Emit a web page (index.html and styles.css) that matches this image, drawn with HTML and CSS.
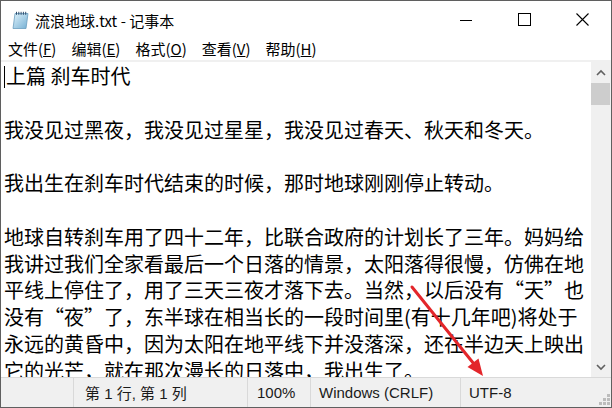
FILE: index.html
```html
<!DOCTYPE html>
<html lang="zh-CN">
<head>
  <meta charset="UTF-8" />
  <title>流浪地球.txt - 记事本</title>
  <link rel="stylesheet" href="styles.css">
</head>
<body>
  <div class="window">
    <header class="titlebar">
      <svg class="app-icon" width="17" height="18" viewBox="0 0 17 18">
        <defs>
          <linearGradient id="pad" x1="0" y1="0" x2="1" y2="1">
            <stop offset="0" stop-color="#dff2fb" />
            <stop offset="1" stop-color="#74afd3" />
          </linearGradient>
        </defs>
        <path d="M3 2.5h13l-2 15H1z" fill="url(#pad)" stroke="#6a9dbf" stroke-width="0.8" />
        <path d="M4.5 0.8v3M6.8 0.8v3M9.1 0.8v3M11.4 0.8v3M13.7 0.8v3" stroke="#2f4d6d" stroke-width="1" />
      </svg>
      <span class="title">流浪地球.txt - 记事本</span>
      <div class="controls">
        <div class="ctl">
          <svg width="12" height="12" viewBox="0 0 12 12"><path d="M0 6.5h12" stroke="#000" stroke-width="1" /></svg>
        </div>
        <div class="ctl">
          <svg width="13" height="13" viewBox="0 0 13 13"><rect x="0.5" y="0.5" width="12" height="12" fill="none" stroke="#000" stroke-width="1" /></svg>
        </div>
        <div class="ctl">
          <svg width="13" height="13" viewBox="0 0 13 13"><path d="M0.5 0.5l12 12M12.5 0.5l-12 12" stroke="#000" stroke-width="1.1" /></svg>
        </div>
      </div>
    </header>

    <nav class="menubar">
      <span>文件(<u>F</u>)</span>
      <span>编辑(<u>E</u>)</span>
      <span>格式(<u>O</u>)</span>
      <span>查看(<u>V</u>)</span>
      <span>帮助(<u>H</u>)</span>
    </nav>

    <section class="editor">
      <div class="text"><span class="caret"></span>上篇 刹车时代

我没见过黑夜，我没见过星星，我没见过春天、秋天和冬天。

我出生在刹车时代结束的时候，那时地球刚刚停止转动。

地球自转刹车用了四十二年，比联合政府的计划长了三年。妈妈给
我讲过我们全家看最后一个日落的情景，太阳落得很慢，仿佛在地
平线上停住了，用了三天三夜才落下去。当然，以后没有“天”也
没有“夜”了，东半球在相当长的一段时间里(有十几年吧)将处于
永远的黄昏中，因为太阳在地平线下并没落深，还在半边天上映出
它的光芒，就在那次漫长的日落中，我出生了。</div>
      <div class="vscroll">
        <div class="arrow">
          <svg width="10" height="7" viewBox="0 0 10 7"><path d="M1 6l4-4 4 4" fill="none" stroke="#606060" stroke-width="1.6" /></svg>
        </div>
        <div class="thumb"></div>
        <div class="track"></div>
        <div class="arrow">
          <svg width="10" height="7" viewBox="0 0 10 7"><path d="M1 1l4 4 4-4" fill="none" stroke="#606060" stroke-width="1.6" /></svg>
        </div>
      </div>
    </section>

    <footer class="statusbar">
      <div class="cell blank"></div>
      <div class="cell pos">第 1 行, 第 1 列</div>
      <div class="cell zoom">100%</div>
      <div class="cell eol">Windows (CRLF)</div>
      <div class="cell enc">UTF-8</div>
      <svg class="grip" width="11" height="11" viewBox="0 0 11 11">
        <rect x="8" y="0" width="3" height="3" />
        <rect x="4" y="4" width="3" height="3" />
        <rect x="8" y="4" width="3" height="3" />
        <rect x="0" y="8" width="3" height="3" />
        <rect x="4" y="8" width="3" height="3" />
        <rect x="8" y="8" width="3" height="3" />
      </svg>
    </footer>

    <!-- красная стрелка-пометка поверх окна -->
    <svg class="annotation" width="612" height="408" viewBox="0 0 612 408">
      <path d="M412 287L474 364" stroke="#e3262b" stroke-width="3" stroke-linecap="round" />
      <path d="M483 376L467.5 367L478.5 358.5z" fill="#e3262b" />
    </svg>
  </div>
</body>
</html>
```

FILE: styles.css
```css
:root {
  --border: #5f5f5f;
  --panel: #f0f0f0;
  --line: #d9d9d9;
  --ui-font: "Noto Sans CJK SC", "Noto Sans", sans-serif;
}

* {
  box-sizing: border-box;
}

body {
  margin: 0;
  background: #2b2b2b;
}

.window {
  position: relative;
  width: 612px;
  height: 408px;
  display: flex;
  flex-direction: column;
  background: #fff;
  border: 1px solid var(--border);
  overflow: hidden;
}

.titlebar {
  height: 37px;
  display: flex;
  align-items: center;
  font-family: var(--ui-font);
  font-size: 15px;
  color: #000;
}

.app-icon {
  margin-left: 11px;
  margin-top: 1px;
}

.title {
  margin-left: 6px;
  margin-top: 1px;
}

.controls {
  margin-left: auto;
  display: flex;
  height: 100%;
}

.ctl {
  width: 58px;
  height: 100%;
  display: flex;
  align-items: center;
  justify-content: center;
}

.menubar {
  height: 22px;
  display: flex;
  align-items: center;
  gap: 15px;
  padding-left: 7px;
  font-family: var(--ui-font);
  font-size: 15px;
  line-height: 22px;
}

.menubar u {
  text-underline-offset: 1px;
}

.editor {
  flex: 1;
  display: flex;
  border-top: 2px solid var(--panel);
  min-height: 0;
}

.text {
  flex: 1;
  padding: 1px 0 0 3px;
  font-family: "Noto Sans CJK SC", sans-serif;
  font-size: 20px;
  line-height: 26.8px;
  white-space: pre;
  color: #000;
  overflow: hidden;
}

.caret {
  display: inline-block;
  width: 1px;
  height: 22px;
  margin-right: 1px;
  background: #000;
  vertical-align: -4px;
}

.vscroll {
  width: 20px;
  display: flex;
  flex-direction: column;
  background: var(--panel);
}

.arrow {
  height: 20px;
  display: flex;
  align-items: center;
  justify-content: center;
}

.vscroll .arrow:first-child {
  padding-top: 1px;
}

.thumb {
  height: 22px;
  margin: 1px 1px 0 0;
  background: #cdcdcd;
}

.track {
  flex: 1;
}

.statusbar {
  height: 30px;
  display: flex;
  align-items: stretch;
  background: var(--panel);
  border-top: 1px solid var(--line);
  font-family: "Liberation Sans", "Noto Sans CJK SC", sans-serif;
  font-size: 15px;
  color: #1a1a1a;
}

.cell {
  display: flex;
  align-items: center;
  border-left: 1px solid var(--line);
  white-space: nowrap;
}

.blank {
  width: 72px;
  border-left: none;
}

.pos {
  width: 174px;
  padding-left: 11px;
}

.zoom {
  width: 63px;
  padding-left: 9px;
}

.eol {
  width: 150px;
  padding-left: 8px;
}

.enc {
  flex: 1;
  padding-left: 8px;
}

.grip {
  align-self: flex-end;
  margin: 0 1px 2px 0;
  fill: #bcbcbc;
}

.annotation {
  position: absolute;
  left: -1px;
  top: -1px;
  pointer-events: none;
}
```
